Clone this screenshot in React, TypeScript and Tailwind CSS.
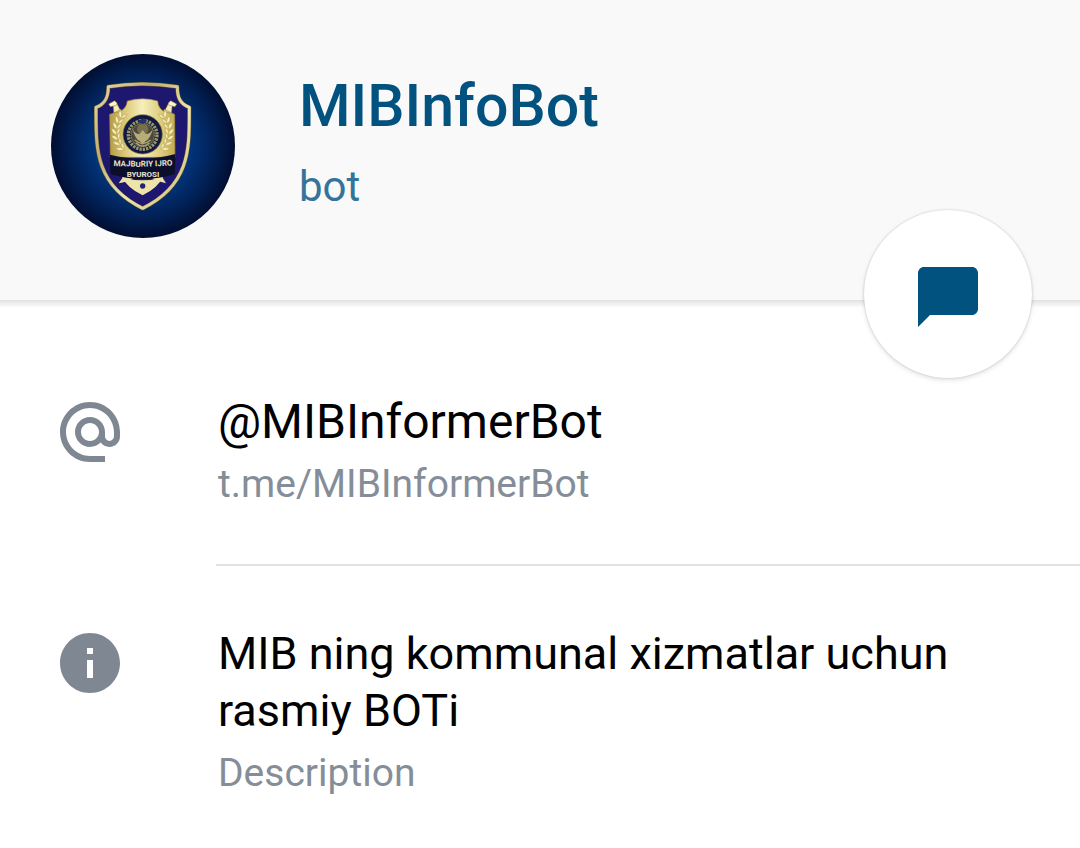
import React from 'react';
import { MdAlternateEmail, MdChatBubble, MdInfo } from 'react-icons/md';

const leaves = [
  { x: 246, y: 216, r: 32 },
  { x: 237, y: 232, r: 20 },
  { x: 232, y: 248, r: 8 },
  { x: 230, y: 264, r: -6 },
  { x: 232, y: 280, r: -20 },
  { x: 237, y: 296, r: -34 },
  { x: 246, y: 311, r: -48 },
];

const Laurel = () => (
  <g>
    {leaves.map((leaf) => (
      <g key={leaf.y} transform={`translate(${leaf.x} ${leaf.y}) rotate(${leaf.r})`}>
        <path d="M0 8C-12 4 -14 -4 -14 -12C-5 -8 0 -2 0 8Z" fill="#f8f1bf" stroke="#b7a153" strokeWidth="1.5" />
        <path d="M0 8C8 4 12 -4 10 -12C3 -8 -1 -2 0 8Z" fill="#f3eaae" stroke="#b7a153" strokeWidth="1.5" />
      </g>
    ))}
  </g>
);

const Sword = () => (
  <g stroke="#8d7a35" strokeWidth="1.5">
    <path d="M219 180L230 177L244 205L222 211Z" fill="#f3eab4" />
    <path d="M206 180L224 170L231 177L229 184L211 188Z" fill="#fbf5cf" />
    <path d="M216 209L243 196L246 203L221 214Z" fill="#e8dc98" />
  </g>
);

const Emblem = () => (
  <svg
    viewBox="33 30 552 552"
    role="img"
    aria-label="Majburiy Ijro Byurosi"
    className="size-[184px] shrink-0 rounded-full"
  >
    <defs>
      <radialGradient id="sky" cx="50%" cy="50%" r="52%">
        <stop offset="0" stopColor="#014393" />
        <stop offset="0.5" stopColor="#01347a" />
        <stop offset="0.75" stopColor="#012055" />
        <stop offset="1" stopColor="#010b2b" />
      </radialGradient>
      <linearGradient id="rim" x1="0" y1="0" x2="1" y2="1">
        <stop offset="0" stopColor="#e6dba6" />
        <stop offset="0.3" stopColor="#c0ae6c" />
        <stop offset="0.6" stopColor="#efe5b0" />
        <stop offset="1" stopColor="#cdbc7a" />
      </linearGradient>
      <linearGradient id="plate" x1="0" y1="0" x2="1" y2="0">
        <stop offset="0" stopColor="#b59c45" />
        <stop offset="0.25" stopColor="#dccb7c" />
        <stop offset="0.5" stopColor="#f6efbd" />
        <stop offset="0.8" stopColor="#dccb7a" />
        <stop offset="1" stopColor="#c3aa52" />
      </linearGradient>
      <path id="line-top" d="M208 365Q309 371 410 363" />
    </defs>
    <rect x="33" y="30" width="552" height="552" fill="url(#sky)" />

    {/* outer shield */}
    <path
      d="M205 128Q307 112 412 128C412 160 420 180 448 190C447 300 458 420 308 493C158 420 169 300 168 190C196 180 205 160 205 128Z"
      fill="#1e1770"
      stroke="#695c2d"
      strokeWidth="12"
      strokeLinejoin="round"
    />
    <path
      d="M205 128Q307 112 412 128C412 160 420 180 448 190C447 300 458 420 308 493C158 420 169 300 168 190C196 180 205 160 205 128Z"
      fill="none"
      stroke="url(#rim)"
      strokeWidth="9"
      strokeLinejoin="round"
    />

    {/* crossed swords */}
    <Sword />
    <g transform="translate(616 0) scale(-1 1)">
      <Sword />
    </g>
    <path d="M250 398L236 418Q262 414 280 402Z" fill="#eee3a5" />
    <path d="M366 398L378 418Q354 414 336 402Z" fill="#eee3a5" />

    {/* inner plate */}
    <path
      d="M262 171Q308 158 353 171Q355 194 372 202L404 211L405 340L211 340L209 211L240 202Q259 194 262 171Z"
      fill="url(#plate)"
      stroke="#9d8638"
      strokeWidth="2"
    />
    <path d="M246 398Q308 420 369 398Q355 430 308 454Q260 430 246 398Z" fill="#eee4aa" />
    <Laurel />
    <g transform="translate(616 0) scale(-1 1)">
      <Laurel />
    </g>

    {/* state seal */}
    <circle cx="308" cy="271" r="59" fill="#101a40" stroke="#897943" strokeWidth="2" />
    <circle cx="308" cy="273" r="43" fill="none" stroke="#9d9568" strokeWidth="10" strokeDasharray="7 3" />
    <circle cx="308" cy="273" r="35" fill="#4a4840" stroke="#807946" strokeWidth="4" strokeDasharray="5 2" />
    <circle cx="308" cy="256" r="17" fill="#77704f" />
    <path d="M277 252Q285 286 300 292L308 302L316 292Q331 286 339 252Q333 270 317 270L308 258L299 270Q283 270 277 252Z" fill="#b8ad78" />
    <path d="M284 288Q308 309 332 288M288 297Q308 315 328 297" fill="none" stroke="#b0a570" strokeWidth="4" />
    <path d="M308 221L313 227L321 229L317 237L308 240L299 237L295 229L303 227Z" fill="#27306b" />

    {/* ribbon */}
    <path d="M210 332Q308 357 406 330L405 391Q308 419 211 391Z" fill="#0c0f2c" />
    <g
      fill="#e6e2d0"
      fontSize="24"
      fontWeight="700"
      fontFamily="Roboto, sans-serif"
      textAnchor="middle"
    >
      <text>
        <textPath href="#line-top" startOffset="50%">MAJBURIY IJRO</textPath>
      </text>
      <text x="309" y="399">BYUROSI</text>
    </g>
    <circle cx="308" cy="426" r="8" fill="#252477" />
  </svg>
);

type InfoRowProps = {
  icon: React.ReactNode;
  title: React.ReactNode;
  caption: React.ReactNode;
};

const InfoRow = ({ icon, title, caption }: InfoRowProps) => (
  <div className="flex items-start gap-[92px] pl-[54px]">
    <div className="shrink-0 pt-[2px] text-[72px] text-[#7f8892]">{icon}</div>
    <div className="flex min-w-0 flex-1 flex-col gap-[10px] pr-[90px]">
      {title}
      <p className="text-[39px] leading-[48px] text-[#858e98]">{caption}</p>
    </div>
  </div>
);

const App = () => {
  return (
    <div className="min-h-screen bg-white font-['Roboto',sans-serif] text-black">
      <header className="relative flex items-start gap-16 bg-[#f9f9f9] pt-[54px] pb-[62px] pl-[51px]">
        <Emblem />
        <div className="flex flex-col gap-5 pt-4">
          <h1 className="text-[59px] leading-[72px] font-medium text-[#02527f]">MIBInfoBot</h1>
          <p className="text-[42px] leading-[50px] text-[#35749a]">bot</p>
        </div>
        <div className="absolute inset-x-0 top-full h-2 bg-linear-to-b from-[#e2e2e2] to-white" />
        <button
          type="button"
          aria-label="Send message"
          className="absolute right-12 -bottom-[78px] flex size-[168px] items-center justify-center rounded-full bg-white pt-[6px] text-[72px] text-[#02527f] shadow-[0_2px_5px_rgba(0,0,0,0.12),0_0_2px_rgba(0,0,0,0.2)]"
        >
          <MdChatBubble />
        </button>
      </header>

      <main className="flex flex-col pt-[94px] pb-12">
        <InfoRow
          icon={<MdAlternateEmail />}
          title={<p className="text-[48px] leading-[56px]">@MIBInformerBot</p>}
          caption={
            <a href="https://t.me/MIBInformerBot">t.me/MIBInformerBot</a>
          }
        />
        <hr className="mt-14 mb-[59px] ml-[216px] border-t-2 border-[#dfe1e4]" />
        <InfoRow
          icon={<MdInfo />}
          title={<p className="text-[45px] leading-[57px]">MIB ning kommunal xizmatlar uchun rasmiy BOTi</p>}
          caption="Description"
        />
      </main>
    </div>
  );
};

export default App;
